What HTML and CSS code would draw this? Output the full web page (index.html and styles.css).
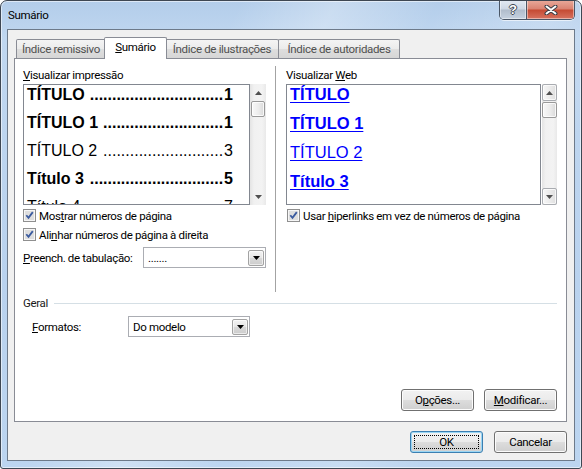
FILE: index.html
```html
<!DOCTYPE html>
<html lang="pt-BR">
<head>
<meta charset="utf-8">
<title>Sumário</title>
<link rel="stylesheet" href="styles.css">
</head>
<body>
<div class="window">
  <div class="titlebar">
    <span class="title">Sumário</span>
    <div class="caption">
      <div class="cbtn help"><span class="qmark">?</span></div>
      <div class="cbtn close">
        <svg width="14" height="10" viewBox="0 0 14 10"><path d="M2.5 1.5L11.5 8.5M11.5 1.5L2.5 8.5" stroke="#3a3f47" stroke-width="4" stroke-linecap="round"/><path d="M2.5 1.5L11.5 8.5M11.5 1.5L2.5 8.5" stroke="#fff" stroke-width="2" stroke-linecap="round"/></svg>
      </div>
    </div>
  </div>

  <div class="client">
    <div class="tabs">
      <div class="tab t1">Índice remissivo</div>
      <div class="tab sel t2"><u>S</u>umário</div>
      <div class="tab t3">Índice de ilustrações</div>
      <div class="tab t4">Índice de autoridades</div>
    </div>

    <div class="panel">
      <div class="cols">
        <div class="col left">
          <div class="lbl"><u>V</u>isualizar impressão</div>
          <div class="pv-wrap">
            <div class="preview print">
              <div class="plist">
                <div class="prow b"><span class="pt">TÍTULO</span><span class="lead">..............................</span><span class="pn">1</span></div>
                <div class="prow b"><span class="pt">TÍTULO 1</span><span class="lead">...........................</span><span class="pn">1</span></div>
                <div class="prow"><span class="pt">TÍTULO 2</span><span class="lead">...........................</span><span class="pn">3</span></div>
                <div class="prow b"><span class="pt">Título 3</span><span class="lead">..............................</span><span class="pn">5</span></div>
                <div class="prow"><span class="pt">Título 4</span><span class="lead">...............................</span><span class="pn">7</span></div>
              </div>
            </div>
            <div class="vscroll flat w16">
              <div class="sarrow"><svg width="7" height="4" viewBox="0 0 7 4"><path d="M0 4H7L3.5 0Z" fill="#505050"/></svg></div>
              <div class="thumb"></div>
              <div class="track"></div>
              <div class="sarrow"><svg width="7" height="4" viewBox="0 0 7 4"><path d="M0 0H7L3.5 4Z" fill="#505050"/></svg></div>
            </div>
          </div>
          <div class="chk first">
            <svg class="cb" width="13" height="13" viewBox="0 0 13 13"><rect x=".5" y=".5" width="12" height="12" fill="#f6f6f6" stroke="#8f8f8f"/><rect x="2" y="2" width="9" height="9" fill="#dedede"/><path d="M3.3 6.2l2.2 2.7 4.3-5.8" fill="none" stroke="#3b5b9f" stroke-width="1.8"/></svg>
            <span>Mos<u>t</u>rar números de página</span>
          </div>
          <div class="chk">
            <svg class="cb" width="13" height="13" viewBox="0 0 13 13"><rect x=".5" y=".5" width="12" height="12" fill="#f6f6f6" stroke="#8f8f8f"/><rect x="2" y="2" width="9" height="9" fill="#dedede"/><path d="M3.3 6.2l2.2 2.7 4.3-5.8" fill="none" stroke="#3b5b9f" stroke-width="1.8"/></svg>
            <span>Ali<u>n</u>har números de página à direita</span>
          </div>
          <div class="combo-row">
            <span class="clabel tab-lbl"><u>P</u>reench. de tabulação:</span>
            <div class="combo tabfill">
              <span class="cval">.......</span>
              <span class="ddbtn"><svg width="7" height="4" viewBox="0 0 7 4"><path d="M0 0H7L3.5 4Z" fill="#000"/></svg></span>
            </div>
          </div>
        </div>

        <div class="vsep"></div>

        <div class="col right">
          <div class="lbl">Visualizar <u>W</u>eb</div>
          <div class="pv-wrap">
            <div class="preview web">
              <div class="wlist">
                <div class="wrow b"><span class="lnk">TÍTULO</span></div>
                <div class="wrow b"><span class="lnk">TÍTULO 1</span></div>
                <div class="wrow"><span class="lnk">TÍTULO 2</span></div>
                <div class="wrow b"><span class="lnk">Título 3</span></div>
              </div>
            </div>
            <div class="vscroll w15">
              <div class="sbtn"><svg width="7" height="4" viewBox="0 0 7 4"><path d="M0 4H7L3.5 0Z" fill="#505050"/></svg></div>
              <div class="thumb"></div>
              <div class="track"></div>
              <div class="sbtn"><svg width="7" height="4" viewBox="0 0 7 4"><path d="M0 0H7L3.5 4Z" fill="#505050"/></svg></div>
            </div>
          </div>
          <div class="chk first">
            <svg class="cb" width="13" height="13" viewBox="0 0 13 13"><rect x=".5" y=".5" width="12" height="12" fill="#f6f6f6" stroke="#8f8f8f"/><rect x="2" y="2" width="9" height="9" fill="#dedede"/><path d="M3.3 6.2l2.2 2.7 4.3-5.8" fill="none" stroke="#3b5b9f" stroke-width="1.8"/></svg>
            <span>Usar <u>h</u>iperlinks em vez de números de página</span>
          </div>
        </div>
      </div>

      <div class="group">
        <span class="gtitle">Geral</span>
        <span class="gline"></span>
      </div>

      <div class="combo-row fmt">
        <span class="clabel fmt-lbl"><u>F</u>ormatos:</span>
        <div class="combo formats">
          <span class="cval">Do modelo</span>
          <span class="ddbtn"><svg width="7" height="4" viewBox="0 0 7 4"><path d="M0 0H7L3.5 4Z" fill="#000"/></svg></span>
        </div>
      </div>

      <div class="pbtns">
        <div class="btn">O<u>p</u>ções...</div>
        <div class="btn"><u>M</u>odificar...</div>
      </div>
    </div>

    <div class="footer">
      <div class="btn default"><span class="focus">OK</span></div>
      <div class="btn">Cancelar</div>
    </div>
  </div>
</div>
</body>
</html>
```
FILE: styles.css
```css
* { box-sizing: border-box; }
html, body { margin: 0; padding: 0; background: #fff; }
body {
  font-family: Roboto, "Noto Sans", sans-serif;
  font-size: 11.5px;
  letter-spacing: -0.33px;
  color: #000;
}
u { text-decoration: underline; text-underline-offset: 1px; }

/* ---------- window frame ---------- */
.window {
  width: 582px;
  height: 469px;
  border: 1px solid #3e4753;
  border-radius: 7px 7px 3px 3px;
  background:
    linear-gradient(115deg, rgba(255,255,255,0) 30%, rgba(255,255,255,.28) 42%, rgba(255,255,255,0) 55%, rgba(255,255,255,.18) 70%, rgba(255,255,255,0) 80%),
    linear-gradient(to bottom, #b3cdea 0%, #c0d7f0 8%, #b9d2ee 60%, #bcd5f0 100%);
  box-shadow: inset 0 0 0 1px rgba(255,255,255,.55);
  padding: 0 6px 7px 6px;
  display: flex;
  flex-direction: column;
  overflow: hidden;
}

.titlebar {
  height: 28px;
  flex: none;
  display: flex;
  justify-content: space-between;
  align-items: flex-start;
}
.title {
  padding-left: 1px;
  line-height: 28px;
  color: #000;
}
.caption {
  display: flex;
  margin-top: -1px;
  height: 20px;
  border: 1px solid #4a5666;
  border-top: none;
  border-radius: 0 0 5px 5px;
  overflow: hidden;
  box-shadow: 0 1px 0 rgba(255,255,255,.6);
}
.cbtn {
  height: 19px;
  display: flex;
  align-items: center;
  justify-content: center;
  box-shadow: inset 0 0 0 1px rgba(255,255,255,.45);
}
.cbtn.help {
  width: 27px;
  border-right: 1px solid #4a5666;
  background: linear-gradient(to bottom, #e3eaf3 0%, #cdd7e4 48%, #b0bccb 52%, #c6d2e0 100%);
}
.cbtn.close {
  width: 47px;
  background: linear-gradient(to bottom, #e9ab9c 0%, #d98271 48%, #c54a32 52%, #d77360 100%);
}
.qmark {
  font-family: "Liberation Sans", sans-serif;
  font-weight: bold;
  font-size: 13px;
  letter-spacing: 0;
  color: #fff;
  text-shadow: -1px 0 #3e4652, 1px 0 #3e4652, 0 -1px #3e4652, 0 1px #3e4652;
  line-height: 1;
}

/* ---------- client area ---------- */
.client {
  height: 432px;
  flex: none;
  border: 1px solid #6d7a8a;
  background: #f0f0f0;
  display: flex;
  flex-direction: column;
}

.tabs {
  margin-top: 7px;
  height: 21px;
  padding-left: 8px;
  display: flex;
  align-items: flex-end;
  flex: none;
}
.tab {
  height: 19px;
  border: 1px solid #898c95;
  border-bottom: none;
  border-radius: 2px 2px 0 0;
  background: linear-gradient(to bottom, #f4f4f4 0%, #ebebeb 50%, #dedede 51%, #d6d6d6 100%);
  color: #505050;
  display: flex;
  align-items: center;
  justify-content: center;
  padding-bottom: 1px;
  white-space: nowrap;
}
.t1 { width: 90px; }
.t3 { width: 114px; }
.t4 { width: 122px; margin-left: -1px; }
.tab.sel {
  width: 63px;
  height: 22px;
  margin: 0 -2px -1px -2px;
  background: #fff;
  color: #000;
  position: relative;
  z-index: 2;
  padding-bottom: 3px;
}

.panel {
  margin-left: 6px;
  width: 553px;
  height: 364px;
  flex: none;
  border: 1px solid #898c95;
  background: #fff;
  padding: 9px 9px 10px 8px;
  display: flex;
  flex-direction: column;
}

.cols {
  height: 224px;
  display: flex;
  flex: none;
}
.col { display: flex; flex-direction: column; }
.col.left { width: 244px; }
.col.right { width: 271px; margin-left: 10px; }
.vsep {
  width: 1px;
  margin-left: 8px;
  margin-top: -2px;
  background: #a3a3a3;
}

.lbl { height: 14px; line-height: 14px; white-space: nowrap; }

.pv-wrap {
  margin-top: 2px;
  height: 121px;
  display: flex;
  flex: none;
}
.preview {
  height: 121px;
  border: 1px solid #828790;
  background: #fff;
  overflow: hidden;
}
.preview.print { width: 227px; }
.preview.web { width: 256px; }

.plist { margin-top: -4px; }
.prow {
  display: flex;
  height: 28px;
  line-height: 28px;
  padding: 0 16px 0 3px;
  font-family: "Liberation Sans", Arial, sans-serif;
  font-size: 16px;
  letter-spacing: 0;
  white-space: nowrap;
}
.prow.b { font-weight: bold; }
.lead {
  flex: 1;
  text-align: right;
  padding-right: 1px;
}
.pt, .pn { flex: none; }

.wlist { margin-top: -5px; }
.wrow {
  height: 29px;
  line-height: 29px;
  padding-left: 3px;
  font-family: "Liberation Sans", Arial, sans-serif;
  font-size: 16.5px;
  letter-spacing: 0;
  white-space: nowrap;
}
.wrow.b { font-weight: bold; }
.lnk {
  color: #0000ff;
  text-decoration: underline;
  text-underline-offset: 2px;
}

/* ---------- scrollbars ---------- */
.vscroll {
  height: 121px;
  display: flex;
  flex-direction: column;
  flex: none;
  background: linear-gradient(to right, #e4e4e4 0%, #f1f1f1 25%, #f3f3f3 75%, #e9e9e9 100%);
}
.w16 { width: 16px; }
.w15 { width: 15px; margin-left: 1px; }
.sarrow {
  height: 17px;
  flex: none;
  display: flex;
  align-items: center;
  justify-content: center;
}
.sbtn {
  height: 17px;
  flex: none;
  display: flex;
  align-items: center;
  justify-content: center;
  border: 1px solid #a9acb1;
  border-radius: 2px;
  background: linear-gradient(to right, #f7f7f7 0%, #ececec 50%, #dfdfdf 100%);
  box-shadow: inset 0 0 0 1px rgba(255,255,255,.7);
}
.thumb {
  height: 16px;
  flex: none;
  margin: 0 1px;
  border: 1px solid #999;
  border-radius: 2px;
  background: linear-gradient(to right, #f8f8f8 0%, #ececec 55%, #d9d9d9 100%);
  box-shadow: inset 0 0 0 1px rgba(255,255,255,.8);
}
.w15 .thumb { margin: 1px 0 0 0; }
.track { flex: 1; }

/* ---------- checkboxes ---------- */
.chk {
  height: 15px;
  display: flex;
  align-items: center;
  white-space: nowrap;
  margin-top: 4px;
}
.chk.first { margin-top: 3px; }
.cb { flex: none; margin-right: 3px; }
.right .cb { margin-left: 1px; }

/* ---------- combo boxes ---------- */
.combo-row {
  display: flex;
  align-items: center;
  margin-top: 5px;
  height: 21px;
  flex: none;
}
.clabel { white-space: nowrap; flex: none; }
.tab-lbl { width: 120px; }
.fmt-lbl { width: 96px; margin-left: 9px; }
.combo {
  height: 21px;
  border: 1px solid #abadb3;
  background: #fff;
  display: flex;
  align-items: center;
  justify-content: space-between;
  padding: 0 1px 0 4px;
}
.tabfill { width: 123px; }
.formats { width: 122px; }
.cval { white-space: nowrap; }
.ddbtn {
  width: 16px;
  height: 16px;
  border: 1px solid #a3a3a3;
  border-radius: 2px;
  background: linear-gradient(to bottom, #f3f3f3 0%, #e6e6e6 50%, #d8d8d8 51%, #cdcdcd 100%);
  box-shadow: inset 0 0 0 1px rgba(255,255,255,.6);
  display: flex;
  align-items: center;
  justify-content: center;
  flex: none;
}

/* ---------- group ---------- */
.group {
  margin-top: 4px;
  height: 14px;
  line-height: 14px;
  display: flex;
  align-items: center;
  flex: none;
}
.gtitle { color: #1a1a1a; }
.gline {
  flex: 1;
  height: 1px;
  margin-left: 6px;
  background: #d5dfe5;
}
.fmt { margin-top: 6px; }

/* ---------- buttons ---------- */
.pbtns {
  margin-top: auto;
  display: flex;
  justify-content: flex-end;
  gap: 10px;
}
.btn {
  width: 73px;
  height: 22px;
  border: 1px solid #707070;
  border-radius: 3px;
  background: linear-gradient(to bottom, #f2f2f2 0%, #ebebeb 50%, #dddddd 51%, #cfcfcf 100%);
  box-shadow: inset 0 0 0 1px #fcfcfc;
  display: flex;
  align-items: center;
  justify-content: center;
  white-space: nowrap;
}
.btn.default {
  border-color: #3c7fb1;
  box-shadow: inset 0 0 0 1px #9ad6f4;
  padding: 3px;
}
.focus {
  width: 100%;
  height: 100%;
  border: 1px dotted #000;
  display: flex;
  align-items: center;
  justify-content: center;
}
.footer {
  margin-top: 9px;
  display: flex;
  justify-content: flex-end;
  gap: 11px;
  padding-right: 7px;
}
```
